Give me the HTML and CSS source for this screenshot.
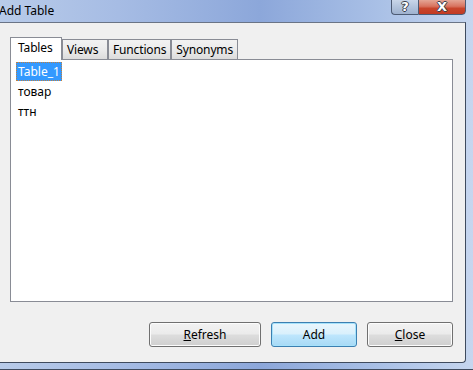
FILE: index.html
```html
<!DOCTYPE html>
<html lang="en">
<head>
    <meta charset="UTF-8">
    <title>Add Table</title>
    <link rel="stylesheet" href="styles.css">
</head>
<body>
    <!-- Add Table dialog -->
    <div class="window">
        <div class="titlebar">
            <div class="title">Add Table</div>
            <div class="caption-buttons">
                <div class="cap help">?</div>
                <div class="cap close">X</div>
            </div>
        </div>

        <div class="client">
            <div class="tabs">
                <div class="tab selected">Tables</div>
                <div class="tab">Views</div>
                <div class="tab">Functions</div>
                <div class="tab">Synonyms</div>
            </div>
            <div class="panel">
                <ul class="list">
                    <li><span class="item active">Table_1</span></li>
                    <li><span class="item">товар</span></li>
                    <li><span class="item">ттн</span></li>
                </ul>
            </div>
            <div class="actions">
                <button class="btn"><u>R</u>efresh</button>
                <button class="btn default">Add</button>
                <button class="btn"><u>C</u>lose</button>
            </div>
        </div>
        <div class="frame-bottom"></div>
    </div>
</body>
</html>
```

FILE: styles.css
```css
/* Windows 7 style dialog */
body {
    margin: 0;
    width: 473px;
    height: 370px;
    overflow: hidden;
    font-family: "Noto Sans", "Open Sans", sans-serif;
    font-size: 12px;
    color: #000;
}

.window {
    width: 473px;
    height: 370px;
    display: flex;
    flex-direction: column;
    background: linear-gradient(90deg, #b8cbe9 0%, #a6bce4 25%, #8ca7da 55%, #a9c0e6 80%, #c6d6ef 100%);
}

.titlebar {
    height: 22px;
    display: flex;
    justify-content: space-between;
    align-items: flex-start;
    padding-right: 7px;
}

.title {
    margin-left: -1px;
    margin-top: 2px;
    font-size: 12px;
    color: #000;
}

.caption-buttons {
    display: flex;
    margin-top: -1px;
}

.cap {
    height: 14px;
    border: 1px solid #4d5b74;
    color: #fff;
    font-family: "DejaVu Sans", sans-serif;
    font-weight: bold;
    font-size: 13px;
    line-height: 13px;
    text-align: center;
    text-shadow: 1px 0 0 #3a3f4a, -1px 0 0 #3a3f4a, 0 1px 0 #3a3f4a, 0 -1px 0 #3a3f4a;
}

.help {
    width: 26px;
    border-right: none;
    border-radius: 0 0 0 4px;
    background: linear-gradient(180deg, #c9d6e9 0%, #b2c3dc 50%, #9fb2cf 100%);
}

.close {
    width: 46px;
    border-radius: 0 0 4px 0;
    background: linear-gradient(180deg, #e4a595 0%, #d8735f 45%, #c8452c 60%, #c23a23 100%);
}

.client {
    margin-right: 7px;
    background: #f0f0f0;
    border-top: 1px solid #6a7486;
    border-right: 1px solid #3f4b5e;
    border-bottom: 1px solid #3f4b5e;
    border-radius: 0 0 4px 0;
    padding: 14px 12px 0 10px;
    box-sizing: border-box;
    height: 341px;
    display: flex;
    flex-direction: column;
}

.tabs {
    display: flex;
    align-items: flex-end;
    height: 23px;
    position: relative;
    z-index: 1;
}

.tab {
    height: 19px;
    min-width: 36px;
    padding: 0 4px;
    margin-bottom: 1px;
    border: 1px solid #898c95;
    border-bottom: none;
    background: linear-gradient(180deg, #f2f2f2 0%, #ebebeb 50%, #dcdcdc 100%);
    line-height: 19px;
    letter-spacing: -0.15px;
}

.tab.selected {
    height: 22px;
    line-height: 20px;
    padding: 0 7px;
    margin-bottom: 0;
    background: #fff;
}

.panel {
    height: 243px;
    box-sizing: border-box;
    border: 1px solid #898c95;
    background: #fff;
    margin-top: -1px;
    padding: 2px 5px;
}

.list {
    list-style: none;
    margin: 0;
    padding: 0;
}

.list li {
    height: 20px;
    line-height: 17px;
}

.item {
    display: inline-block;
    padding: 0 1px;
    border: 1px solid transparent;
}

.item.active {
    background: #3399ff;
    color: #fff;
    border: 1px dotted #c0803f;
}

.actions {
    display: flex;
    justify-content: flex-end;
    gap: 10px;
    margin-top: 20px;
}

.btn {
    height: 25px;
    width: 86px;
    font-family: inherit;
    font-size: 12px;
    color: #000;
    border: 1px solid #707070;
    border-radius: 3px;
    background: linear-gradient(180deg, #f2f2f2 0%, #ebebeb 48%, #dddddd 52%, #cfcfcf 100%);
    box-shadow: inset 0 0 0 1px #fcfcfc;
    padding: 0;
}

.btn:first-child {
    width: 112px;
}

.btn.default {
    border-color: #3c7fb1;
    background: linear-gradient(180deg, #eaf6fd 0%, #d9f0fc 48%, #bee6fd 52%, #a7d9f5 100%);
    box-shadow: inset 0 0 0 1px #a6e2fb;
}

.frame-bottom {
    flex: 1;
    border-bottom: 1px solid #3f4b5e;
}
```
